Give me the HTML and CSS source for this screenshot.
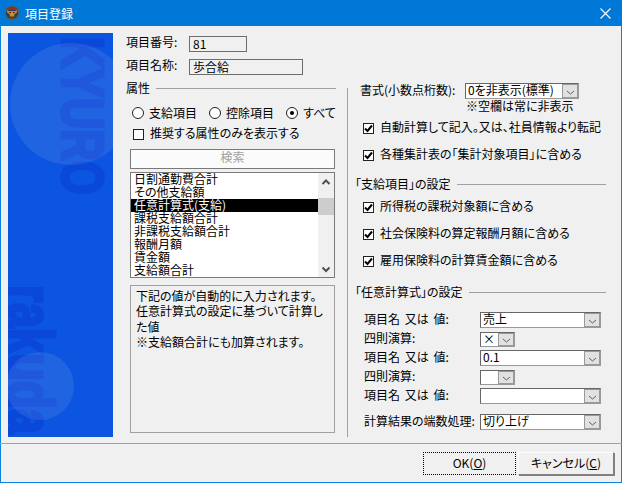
FILE: index.html
```html
<!DOCTYPE html>
<html lang="ja">
<head>
    <meta charset="UTF-8">
    <title>項目登録</title>
    <link rel="stylesheet" href="styles.css">
</head>
<body>
<div class="window">
    <header class="titlebar">
        <svg class="app-icon" width="16" height="16" viewBox="0 0 16 16">
            <circle cx="8" cy="8" r="7.5" fill="#4c5f70"/>
            <circle cx="8" cy="8" r="6" fill="#1f3f5c"/>
            <path d="M3 2.5 H13 L12 5 H4 Z" fill="#a8281c"/>
            <path d="M2.5 5 L5 6 H11 L13.5 5 L12.5 8 L10.5 9 L10 13.5 H6 L5.5 9 L3.5 8 Z" fill="#d08a24"/>
            <path d="M6 11.5 H10 V13.5 H6 Z" fill="#5a3010"/>
            <path d="M5.5 7 H7 V8 H5.5 Z M9 7 H10.5 V8 H9 Z" fill="#2a1405"/>
        </svg>
        <span class="title">項目登録</span>
        <svg class="close" width="11" height="11" viewBox="0 0 11 11">
            <path d="M0.5 0.5 L10.5 10.5 M10.5 0.5 L0.5 10.5" stroke="#fff" stroke-width="1.1" fill="none"/>
        </svg>
    </header>

    <div class="content">
        <aside class="banner">
            <span class="mark mark-top">KYURO</span>
            <span class="mark mark-bottom">rakuda</span>
            <div class="disc disc-big"></div>
            <div class="disc disc-small"></div>
        </aside>

        <section class="left">
            <div class="field">
                <label class="field-label">項目番号:</label>
                <div class="readonly readonly-short">81</div>
            </div>
            <div class="field field-name">
                <label class="field-label">項目名称:</label>
                <div class="readonly readonly-long">歩合給</div>
            </div>

            <div class="group group-attr"><span>属性</span><i></i></div>

            <div class="radios">
                <span class="radio"></span><span class="radio-text">支給項目</span>
                <span class="radio"></span><span class="radio-text">控除項目</span>
                <span class="radio on"></span><span class="radio-text">すべて</span>
            </div>
            <div class="recommend">
                <span class="check"></span><span class="opt-text">推奨する属性のみを表示する</span>
            </div>

            <button class="search">検索</button>

            <div class="listbox">
                <ul class="items">
                    <li>日割通勤費合計</li>
                    <li>その他支給額</li>
                    <li class="selected">任意計算式(支給)</li>
                    <li>課税支給額合計</li>
                    <li>非課税支給額合計</li>
                    <li>報酬月額</li>
                    <li>賃金額</li>
                    <li>支給額合計</li>
                </ul>
                <div class="scrollbar">
                    <svg class="arrow" width="16" height="16" viewBox="0 0 16 16"><path d="M4.5 11 L8 7.5 L11.5 11" stroke="#505050" stroke-width="2" fill="none"/></svg>
                    <div class="thumb"></div>
                    <svg class="arrow arrow-down" width="16" height="16" viewBox="0 0 16 16"><path d="M4.5 6.5 L8 10 L11.5 6.5" stroke="#505050" stroke-width="2" fill="none"/></svg>
                </div>
            </div>

            <div class="desc">下記の値が自動的に入力されます。<br>任意計算式の設定に基づいて計算した値<br>※支給額合計にも加算されます。</div>
        </section>

        <section class="right">
            <div class="format">
                <label class="format-label">書式(小数点桁数):</label>
                <div class="combo combo-format"><span>0を非表示(標準)</span><b class="drop"><svg width="9" height="5" viewBox="0 0 9 5"><path d="M1 1 L4.5 4 L8 1" stroke="#606060" fill="none"/></svg></b></div>
            </div>
            <div class="note">※空欄は常に非表示</div>

            <div class="opt opt-auto"><span class="check on"><svg width="9" height="9" viewBox="0 0 9 9"><path d="M1 4.5 L3.5 7 L8 1.5" stroke="#000" stroke-width="2" fill="none"/></svg></span><span class="opt-text">自動計算して記入。又は、社員情報より転記</span></div>
            <div class="opt opt-second"><span class="check on"><svg width="9" height="9" viewBox="0 0 9 9"><path d="M1 4.5 L3.5 7 L8 1.5" stroke="#000" stroke-width="2" fill="none"/></svg></span><span class="opt-text">各種集計表の「集計対象項目」に含める</span></div>

            <div class="group group-pay"><span>「支給項目」の設定</span><i></i></div>

            <div class="opt opt-first"><span class="check on"><svg width="9" height="9" viewBox="0 0 9 9"><path d="M1 4.5 L3.5 7 L8 1.5" stroke="#000" stroke-width="2" fill="none"/></svg></span><span class="opt-text">所得税の課税対象額に含める</span></div>
            <div class="opt opt-next"><span class="check on"><svg width="9" height="9" viewBox="0 0 9 9"><path d="M1 4.5 L3.5 7 L8 1.5" stroke="#000" stroke-width="2" fill="none"/></svg></span><span class="opt-text">社会保険料の算定報酬月額に含める</span></div>
            <div class="opt opt-next"><span class="check on"><svg width="9" height="9" viewBox="0 0 9 9"><path d="M1 4.5 L3.5 7 L8 1.5" stroke="#000" stroke-width="2" fill="none"/></svg></span><span class="opt-text">雇用保険料の計算賃金額に含める</span></div>

            <div class="group group-calc"><span>「任意計算式」の設定</span><i></i></div>

            <div class="calc">
                <div class="calc-row">
                    <label>項目名 又は 値:</label>
                    <div class="combo combo-wide"><span>売上</span><b class="drop"><svg width="9" height="5" viewBox="0 0 9 5"><path d="M1 1 L4.5 4 L8 1" stroke="#606060" fill="none"/></svg></b></div>
                </div>
                <div class="calc-row">
                    <label>四則演算:</label>
                    <div class="combo combo-op"><span>×</span><b class="drop"><svg width="9" height="5" viewBox="0 0 9 5"><path d="M1 1 L4.5 4 L8 1" stroke="#606060" fill="none"/></svg></b></div>
                </div>
                <div class="calc-row">
                    <label>項目名 又は 値:</label>
                    <div class="combo combo-wide"><span>0.1</span><b class="drop"><svg width="9" height="5" viewBox="0 0 9 5"><path d="M1 1 L4.5 4 L8 1" stroke="#606060" fill="none"/></svg></b></div>
                </div>
                <div class="calc-row">
                    <label>四則演算:</label>
                    <div class="combo combo-op"><span></span><b class="drop"><svg width="9" height="5" viewBox="0 0 9 5"><path d="M1 1 L4.5 4 L8 1" stroke="#606060" fill="none"/></svg></b></div>
                </div>
                <div class="calc-row">
                    <label>項目名 又は 値:</label>
                    <div class="combo combo-wide"><span></span><b class="drop"><svg width="9" height="5" viewBox="0 0 9 5"><path d="M1 1 L4.5 4 L8 1" stroke="#606060" fill="none"/></svg></b></div>
                </div>
                <div class="calc-row calc-round">
                    <label>計算結果の端数処理:</label>
                    <div class="combo combo-wide"><span>切り上げ</span><b class="drop"><svg width="9" height="5" viewBox="0 0 9 5"><path d="M1 1 L4.5 4 L8 1" stroke="#606060" fill="none"/></svg></b></div>
                </div>
            </div>
        </section>
    </div>

    <footer class="footer">
        <button class="btn btn-ok"><span class="focus">OK(<u>O</u>)</span></button>
        <button class="btn btn-cancel">キャンセル(<u>C</u>)</button>
    </footer>
</div>
</body>
</html>
```

FILE: styles.css
```css
* {
    box-sizing: border-box;
}

html, body {
    margin: 0;
    padding: 0;
}

body {
    width: 622px;
    height: 483px;
    overflow: hidden;
    font-family: "Noto Sans CJK JP", "Noto Sans", sans-serif;
    font-size: 12px;
    font-feature-settings: "palt";
    line-height: 15px;
    color: #000;
}

.window {
    width: 622px;
    height: 483px;
    display: flex;
    flex-direction: column;
    background-color: #f0f0f0;
    border: 1px solid #0a84e0;
    border-top: none;
}

.titlebar {
    height: 26px;
    margin: 0 -1px;
    padding: 0 11px 0 4px;
    display: flex;
    align-items: center;
    background-color: #0078d7;
    color: #fff;
}

.app-icon {
    margin-right: 5px;
}

.title {
    flex-grow: 1;
}

.content {
    flex-grow: 1;
    display: flex;
    padding: 7px 0 0 7px;
}

/* blue picture on the left */
.banner {
    position: relative;
    width: 105px;
    height: 404px;
    flex-shrink: 0;
    overflow: hidden;
    background-color: #0c55e0;
}

.disc {
    position: absolute;
    border-radius: 50%;
    background-color: rgba(255, 255, 255, 0.09);
}

.disc-big {
    left: 2px;
    top: 10px;
    width: 122px;
    height: 122px;
}

.disc-small {
    left: -2px;
    top: 319px;
    width: 68px;
    height: 68px;
}

.mark {
    position: absolute;
    font-family: "Liberation Sans", sans-serif;
    font-weight: bold;
    white-space: nowrap;
    color: #0a48da;
    -webkit-text-stroke: 3px #0a48da;
    line-height: 44px;
    transform-origin: left top;
    font-feature-settings: normal;
}

.mark-top {
    left: 96px;
    top: 4px;
    font-size: 59px;
    transform: rotate(90deg) scaleX(0.74);
}

.mark-bottom {
    left: 44px;
    top: 252px;
    font-size: 64px;
    transform: rotate(90deg) scaleX(0.71);
}

/* left column */
.left {
    width: 210px;
    margin-left: 13px;
    padding-top: 3px;
    display: flex;
    flex-direction: column;
    flex-shrink: 0;
}

.field {
    height: 16px;
    display: flex;
    align-items: center;
}

.field-name {
    margin-top: 7px;
}

.field-label {
    width: 63px;
    margin-top: -6px;
}

.readonly {
    height: 16px;
    padding-left: 3px;
    border: 1px solid #6d6d6d;
    line-height: 14px;
}

.readonly-short {
    width: 58px;
}

.readonly-long {
    width: 114px;
}

.group {
    height: 15px;
    display: flex;
    align-items: center;
    gap: 6px;
}

.group span {
    margin-top: -3px;
}

.group i {
    flex-grow: 1;
    height: 1px;
    background-color: #a0a0a0;
}

.group-attr {
    margin-top: 6px;
}

.radios {
    height: 16px;
    margin-top: 9px;
    padding-left: 6px;
    display: flex;
    align-items: center;
}

.radio {
    width: 12px;
    height: 12px;
    border: 1px solid #222;
    border-radius: 50%;
    background-color: #fff;
    display: flex;
    align-items: center;
    justify-content: center;
    flex-shrink: 0;
}

.radio.on::after {
    content: "";
    width: 4px;
    height: 4px;
    border-radius: 50%;
    background-color: #000;
}

.radio-text {
    margin: -2px 12px 0 5px;
    white-space: nowrap;
}

.radio-text:last-child {
    margin-right: 0;
}

.recommend {
    height: 16px;
    margin-top: 5px;
    padding-left: 7px;
    display: flex;
    align-items: center;
    gap: 6px;
}

.opt-text {
    margin-top: -3px;
}

.check {
    width: 11px;
    height: 11px;
    border: 1px solid #222;
    background-color: #fff;
    display: flex;
    align-items: center;
    justify-content: center;
    flex-shrink: 0;
}

.search {
    width: 205px;
    height: 20px;
    margin: 7px 0 0 4px;
    padding: 0 0 4px;
    border: 1px solid #7a7a7a;
    background-color: #fbfbfb;
    color: #a0a0a0;
    font: inherit;
    line-height: 14px;
}

.listbox {
    width: 205px;
    height: 106px;
    margin: 3px 0 0 4px;
    display: flex;
    border: 1px solid #7a7a7a;
    background-color: #fff;
}

.items {
    list-style: none;
    margin: 0;
    padding: 0;
    flex-grow: 1;
}

.items li {
    height: 13px;
    padding-left: 3px;
    line-height: 11px;
    white-space: nowrap;
}

.items .selected {
    background-color: #000;
    color: #fff;
}

.scrollbar {
    width: 16px;
    flex-shrink: 0;
    display: flex;
    flex-direction: column;
    background-color: #f0f0f0;
}

.arrow {
    display: block;
}

.arrow-down {
    margin-top: auto;
}

.thumb {
    height: 17px;
    margin-top: 9px;
    background-color: #cdcdcd;
}

.desc {
    width: 205px;
    height: 148px;
    margin: 7px 0 0 4px;
    padding: 2px 5px;
    border: 1px solid #a0a0a0;
    line-height: 15.3px;
}

/* right column, border-left is the divider */
.right {
    width: 260px;
    height: 349px;
    margin: 55px 0 0 11px;
    padding-left: 7px;
    border-left: 1px solid #a0a0a0;
    display: flex;
    flex-direction: column;
    flex-shrink: 0;
}

.format {
    height: 16px;
    margin-top: -5px;
    padding-left: 5px;
    display: flex;
    align-items: center;
}

.format-label {
    width: 105px;
    margin-top: -4px;
    white-space: nowrap;
}

.note {
    height: 15px;
    margin-top: -1px;
    padding-left: 111px;
}

.opt {
    height: 16px;
    padding-left: 8px;
    display: flex;
    align-items: center;
    gap: 6px;
}

.opt-auto {
    margin-top: 7px;
}

.opt-second {
    margin-top: 11px;
}

.opt-next {
    margin-top: 11px;
}

.opt-first {
    margin-top: 7px;
}

.group-pay {
    margin-top: 14px;
    width: 251px;
}

.group-calc {
    margin-top: 16px;
    width: 251px;
}

.calc {
    margin-top: 12px;
    padding-left: 9px;
}

.calc-row {
    height: 19px;
    display: flex;
    align-items: flex-start;
}

.calc-row label {
    width: 116px;
    margin-top: -1px;
    word-spacing: 2px;
    white-space: nowrap;
}

.calc-round {
    margin-top: 7px;
}

.combo {
    height: 16px;
    display: flex;
    border: 1px solid;
    border-color: #666 #999 #999 #666;
    background-color: #fff;
}

.combo span {
    flex-grow: 1;
    padding-left: 2px;
    line-height: 12px;
    white-space: nowrap;
}

.combo-format {
    width: 114px;
}

.combo-wide {
    width: 121px;
}

.combo-op {
    width: 35px;
    height: 15px;
    margin-top: 1px;
}

.combo-op span {
    font-feature-settings: normal;
}

.drop {
    width: 16px;
    flex-shrink: 0;
    display: flex;
    align-items: flex-end;
    justify-content: center;
    padding-bottom: 2px;
    background-color: #e1e1e1;
    border: 1px solid #999;
}

.footer {
    height: 39px;
    margin: 0 -1px;
    padding: 8px 8px 0 0;
    display: flex;
    justify-content: flex-end;
    gap: 2px;
    border-top: 1px solid #a0a0a0;
}

.btn {
    width: 96px;
    height: 23px;
    padding: 0 0 2px;
    background-color: #f0f0f0;
    border: 1px solid;
    border-color: #fff #808080 #808080 #fff;
    box-shadow: 1px 1px 0 #808080;
    font: inherit;
    font-feature-settings: "palt";
    line-height: 15px;
    color: #000;
}

.btn-ok {
    width: 93px;
    padding: 0;
    border: none;
    box-shadow: none;
}

.focus {
    display: block;
    height: 23px;
    line-height: 19px;
    border: 1px dotted #000;
}
```
